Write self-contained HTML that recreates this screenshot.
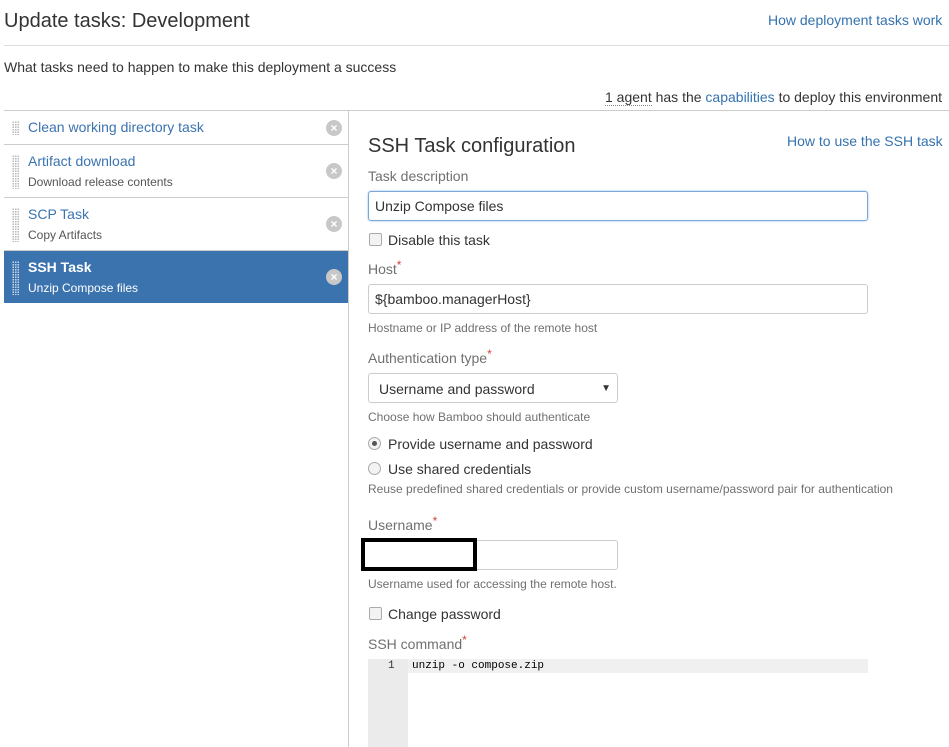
<!DOCTYPE html>
<html><head><meta charset="utf-8"><style>
body{margin:0;width:949px;height:747px;overflow:hidden;background:#fff;font-family:"Liberation Sans",Arial,sans-serif;color:#333;position:relative}
.a{position:absolute;white-space:nowrap}
a{color:#3572b0;text-decoration:none}
.hl{position:absolute;height:1px;background:#ccc}
.item{position:absolute;left:4px;width:344px;border-bottom:1px solid #ccc;background:#fff}
.item .t{position:absolute;left:24px;font-size:14px;color:#3b73af}
.item .s{position:absolute;left:24px;font-size:12px;color:#555}
.grip{position:absolute;left:8px;width:7px;background-image:radial-gradient(#bbb 0.8px,transparent 1px);background-size:2.5px 2.5px}
.x{position:absolute;right:6px;width:16px;height:16px;border-radius:50%;background:#c8c8c8;color:#fff;font-size:12px;font-weight:bold;line-height:16px;text-align:center}
.lab{font-size:14px;color:#707070}
.req{color:#d04437;font-size:12px;vertical-align:top;position:relative;top:-3px}
.help{font-size:12px;color:#707070}
.inp{position:absolute;border:1px solid #ccc;border-radius:3px;background:#fff;font-size:14px;box-sizing:border-box;padding-left:6px}
.cb{position:absolute;width:11px;height:11px;border:1px solid #aaa;border-radius:2px;background:#f3f3f3}
.rb{position:absolute;width:11px;height:11px;border:1px solid #aaa;border-radius:50%;background:#f3f3f3}
.ck{font-size:14px;color:#333}
</style></head><body>
<div class="a" style="left:4px;top:10px;font-size:20px;color:#333">Update tasks: Development</div>
<div class="a" style="left:768px;top:12px;font-size:14px"><a>How deployment tasks work</a></div>
<div class="hl" style="left:4px;top:45px;width:945px;background:#ddd"></div>
<div class="a" style="left:4px;top:59px;font-size:14px">What tasks need to happen to make this deployment a success</div>
<div class="a" style="left:605px;top:89px;font-size:14px"><span style="border-bottom:1px dotted #888">1 agent</span> has the <a>capabilities</a> to deploy this environment</div>
<div class="hl" style="left:4px;top:110px;width:945px"></div>
<div style="position:absolute;left:348px;top:111px;width:1px;height:636px;background:#ccc"></div>

<div class="item" style="top:111px;height:33px"><div class="grip" style="top:10px;height:14px"></div><div class="t" style="top:8px">Clean working directory task</div><div class="x" style="top:9px">×</div></div>
<div class="item" style="top:145px;height:52px"><div class="grip" style="top:10px;height:34px"></div><div class="t" style="top:8px">Artifact download</div><div class="s" style="top:30px">Download release contents</div><div class="x" style="top:18px">×</div></div>
<div class="item" style="top:198px;height:52px"><div class="grip" style="top:10px;height:34px"></div><div class="t" style="top:8px">SCP Task</div><div class="s" style="top:30px">Copy Artifacts</div><div class="x" style="top:18px">×</div></div>
<div class="item" style="top:251px;height:52px;background:#3b73af;border-bottom:none"><div class="grip" style="top:10px;height:34px;background-image:radial-gradient(#c8d6ea 0.8px,transparent 1px)"></div><div class="t" style="top:8px;color:#fff;font-weight:bold">SSH Task</div><div class="s" style="top:30px;color:#fff">Unzip Compose files</div><div class="x" style="top:18px">×</div></div>

<div class="a" style="left:368px;top:135px;font-size:20px;color:#333">SSH Task configuration</div>
<div class="a" style="left:787px;top:133px;font-size:14px"><a>How to use the SSH task</a></div>
<div class="a lab" style="left:368px;top:168px">Task description</div>
<div class="inp" style="left:368px;top:191px;width:500px;height:30px;line-height:28px;border-color:#7aa7d9;box-shadow:0 0 2px #9cc0e8">Unzip Compose files</div>
<div class="cb" style="left:369px;top:233px"></div><div class="a ck" style="left:388px;top:232px">Disable this task</div>
<div class="a lab" style="left:368px;top:261px">Host<span class="req">*</span></div>
<div class="inp" style="left:368px;top:284px;width:500px;height:30px;line-height:28px">${bamboo.managerHost}</div>
<div class="a help" style="left:368px;top:321px">Hostname or IP address of the remote host</div>
<div class="a lab" style="left:368px;top:350px">Authentication type<span class="req">*</span></div>
<div class="inp" style="left:368px;top:373px;width:250px;height:30px;line-height:30px;padding-left:10px">Username and password<span style="position:absolute;right:6px;font-size:10px">▼</span></div>
<div class="a help" style="left:368px;top:410px">Choose how Bamboo should authenticate</div>
<div class="rb" style="left:368px;top:437px"><div style="position:absolute;left:3px;top:3px;width:5px;height:5px;border-radius:50%;background:#555"></div></div>
<div class="a ck" style="left:388px;top:436px">Provide username and password</div>
<div class="rb" style="left:368px;top:462px"></div>
<div class="a ck" style="left:388px;top:461px">Use shared credentials</div>
<div class="a help" style="left:368px;top:482px">Reuse predefined shared credentials or provide custom username/password pair for authentication</div>
<div class="a lab" style="left:368px;top:517px">Username<span class="req">*</span></div>
<div class="inp" style="left:368px;top:540px;width:250px;height:30px"></div>
<div style="position:absolute;left:361px;top:538px;width:108px;height:25px;border:4px solid #000;background:#fff"></div>
<div class="a help" style="left:368px;top:577px">Username used for accessing the remote host.</div>
<div class="cb" style="left:369px;top:607px"></div><div class="a ck" style="left:388px;top:606px">Change password</div>
<div class="a lab" style="left:368px;top:636px">SSH command<span class="req">*</span></div>
<div style="position:absolute;left:368px;top:659px;width:40px;height:88px;background:#ebebeb"></div>
<div style="position:absolute;left:408px;top:659px;width:460px;height:14px;background:#f0f0f0"></div>
<div class="a" style="left:388px;top:660px;font-family:'Liberation Mono',monospace;font-size:11px;color:#333">1</div>
<div class="a" style="left:412px;top:660px;font-family:'Liberation Mono',monospace;font-size:11px;color:#000">unzip -o compose.zip</div>
</body></html>
